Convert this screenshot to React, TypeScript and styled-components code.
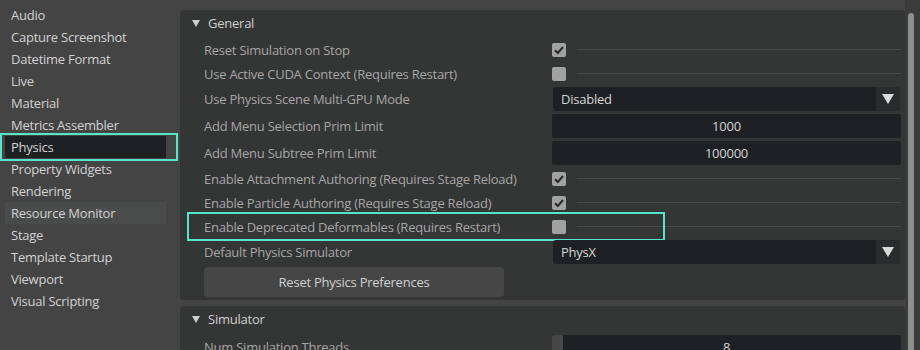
import React from "react";
import styled, { createGlobalStyle } from "styled-components";

const GlobalStyle = createGlobalStyle`
  html, body {
    margin: 0;
    padding: 0;
    background: #444444;
  }
  * {
    box-sizing: border-box;
  }
`;

const Window = styled.div`
  width: 920px;
  height: 350px;
  overflow: hidden;
  display: flex;
  background: #444444;
  font-family: "Open Sans", "Noto Sans", sans-serif;
  font-size: 13px;
  letter-spacing: -0.24px;
`;

const Sidebar = styled.div`
  width: 180px;
  flex: none;
  padding: 4px 14px 0 5px;
  display: flex;
  flex-direction: column;
`;

const NavItem = styled.div<{ $selected?: boolean; $hover?: boolean }>`
  position: relative;
  height: 22px;
  line-height: 22px;
  padding-left: 6px;
  color: #d2d2d2;
  white-space: nowrap;
  background: ${(p) => (p.$selected ? "#1f2023" : p.$hover ? "#4a4c4c" : "transparent")};
`;

const Highlight = styled.div<{ $top: number; $left: number; $width: number; $height: number }>`
  position: absolute;
  top: ${(p) => p.$top}px;
  left: ${(p) => p.$left}px;
  width: ${(p) => p.$width}px;
  height: ${(p) => p.$height}px;
  border: 2px solid #55e6c9;
  pointer-events: none;
`;

const Content = styled.div`
  flex: 1;
  display: flex;
  flex-direction: column;
  gap: 6px;
  padding-top: 10px;
  min-width: 0;
`;

const Panel = styled.div`
  background: #343535;
  border-radius: 4px;
  padding: 0 4px 3px 24px;
  display: flex;
  flex-direction: column;
  gap: 3px;
`;

const Header = styled.div`
  height: 26px;
  display: flex;
  align-items: center;
  gap: 8px;
  margin-left: -12px;
  color: #cfcfcf;
`;

const Caret = styled.span`
  width: 0;
  height: 0;
  border-left: 4px solid transparent;
  border-right: 4px solid transparent;
  border-top: 7px solid #cfcfcf;
  margin-top: 1px;
`;

const Row = styled.div<{ $h?: number }>`
  position: relative;
  display: flex;
  align-items: center;
  height: ${(p) => p.$h ?? 24}px;
`;

const Label = styled.div`
  width: 348px;
  flex: none;
  color: #a6a6a6;
  white-space: nowrap;
`;

const Widget = styled.div`
  flex: 1;
  display: flex;
  align-items: center;
  height: 100%;
`;

const Box = styled.div`
  width: 14px;
  height: 14px;
  border-radius: 2px;
  background: #a2a2a2;
  display: flex;
  align-items: center;
  justify-content: center;
  flex: none;
`;

const Rule = styled.div`
  flex: 1;
  height: 1px;
  margin-left: 11px;
  background: #464b4a;
`;

const Combo = styled.div`
  flex: 1;
  height: 24px;
  margin-left: 1px;
  margin-right: 1px;
  border-radius: 3px;
  background: #1f2023;
  display: flex;
  align-items: center;
  color: #d4d4d4;
  overflow: hidden;
`;

const ComboText = styled.span`
  flex: 1;
  padding-left: 8px;
`;

const ComboArrow = styled.div`
  width: 24px;
  height: 100%;
  background: #2a2b2c;
  display: flex;
  align-items: center;
  justify-content: center;
`;

const ArrowTri = styled.span`
  width: 0;
  height: 0;
  border-left: 6px solid transparent;
  border-right: 6px solid transparent;
  border-top: 10px solid #dadada;
`;

const Field = styled.div`
  position: relative;
  flex: 1;
  height: 24px;
  border-radius: 2px;
  background: #1f2023;
  color: #d4d4d4;
  display: flex;
  align-items: center;
  justify-content: center;
  overflow: hidden;
`;

const Fill = styled.div`
  position: absolute;
  left: 0;
  top: 0;
  bottom: 0;
  background: #474747;
`;

const FieldText = styled.span`
  position: relative;
`;

const ResetButton = styled.div`
  width: 300px;
  height: 30px;
  border-radius: 4px;
  background: #464646;
  color: #cfcfcf;
  display: flex;
  align-items: center;
  justify-content: center;
`;

const ScrollTrack = styled.div`
  width: 15px;
  flex: none;
  background: #3b3b3b;
  padding: 13px 6px 0 3px;
`;

const Thumb = styled.div`
  height: 400px;
  border-radius: 3px;
  background: #8e8e8e;
`;

const navItems = [
  "Audio",
  "Capture Screenshot",
  "Datetime Format",
  "Live",
  "Material",
  "Metrics Assembler",
  "Physics",
  "Property Widgets",
  "Rendering",
  "Resource Monitor",
  "Stage",
  "Template Startup",
  "Viewport",
  "Visual Scripting",
];

const Checkbox = ({ checked }: { checked?: boolean }) => (
  <Widget>
    <Box>
      {checked && (
        <svg width="12" height="12" viewBox="0 0 12 12">
          <path d="M2 6.2 L4.8 9 L10 3" fill="none" stroke="#2a2a2a" strokeWidth="2" />
        </svg>
      )}
    </Box>
    <Rule />
  </Widget>
);

const Dropdown = ({ value }: { value: string }) => (
  <Widget>
    <Combo>
      <ComboText>{value}</ComboText>
      <ComboArrow>
        <ArrowTri />
      </ComboArrow>
    </Combo>
  </Widget>
);

const NumberField = ({ value, fill }: { value: string; fill?: number }) => (
  <Widget>
    <Field>
      {fill ? <Fill style={{ width: fill }} /> : null}
      <FieldText>{value}</FieldText>
    </Field>
  </Widget>
);

export default function App() {
  return (
    <>
      <GlobalStyle />
      <Window>
        <Sidebar>
          {navItems.map((name) => (
            <NavItem
              key={name}
              $selected={name === "Physics"}
              $hover={name === "Resource Monitor"}
            >
              {name}
              {name === "Physics" && (
                <Highlight $top={-3} $left={-5} $width={178} $height={28} />
              )}
            </NavItem>
          ))}
        </Sidebar>
        <Content>
          <Panel>
            <Header>
              <Caret />
              General
            </Header>
            <Row $h={21}>
              <Label>Reset Simulation on Stop</Label>
              <Checkbox checked />
            </Row>
            <Row $h={21}>
              <Label>Use Active CUDA Context (Requires Restart)</Label>
              <Checkbox />
            </Row>
            <Row>
              <Label>Use Physics Scene Multi-GPU Mode</Label>
              <Dropdown value="Disabled" />
            </Row>
            <Row>
              <Label>Add Menu Selection Prim Limit</Label>
              <NumberField value="1000" />
            </Row>
            <Row>
              <Label>Add Menu Subtree Prim Limit</Label>
              <NumberField value="100000" />
            </Row>
            <Row $h={21}>
              <Label>Enable Attachment Authoring (Requires Stage Reload)</Label>
              <Checkbox checked />
            </Row>
            <Row $h={21}>
              <Label>Enable Particle Authoring (Requires Stage Reload)</Label>
              <Checkbox checked />
            </Row>
            <Row $h={21}>
              <Label>Enable Deprecated Deformables (Requires Restart)</Label>
              <Checkbox />
              <Highlight $top={-4} $left={-17} $width={478} $height={29} />
            </Row>
            <Row>
              <Label>Default Physics Simulator</Label>
              <Dropdown value="PhysX" />
            </Row>
            <Row $h={30}>
              <ResetButton>Reset Physics Preferences</ResetButton>
            </Row>
          </Panel>
          <Panel>
            <Header>
              <Caret />
              Simulator
            </Header>
            <Row>
              <Label>Num Simulation Threads</Label>
              <NumberField value="8" fill={11} />
            </Row>
          </Panel>
        </Content>
        <ScrollTrack>
          <Thumb />
        </ScrollTrack>
      </Window>
    </>
  );
}
